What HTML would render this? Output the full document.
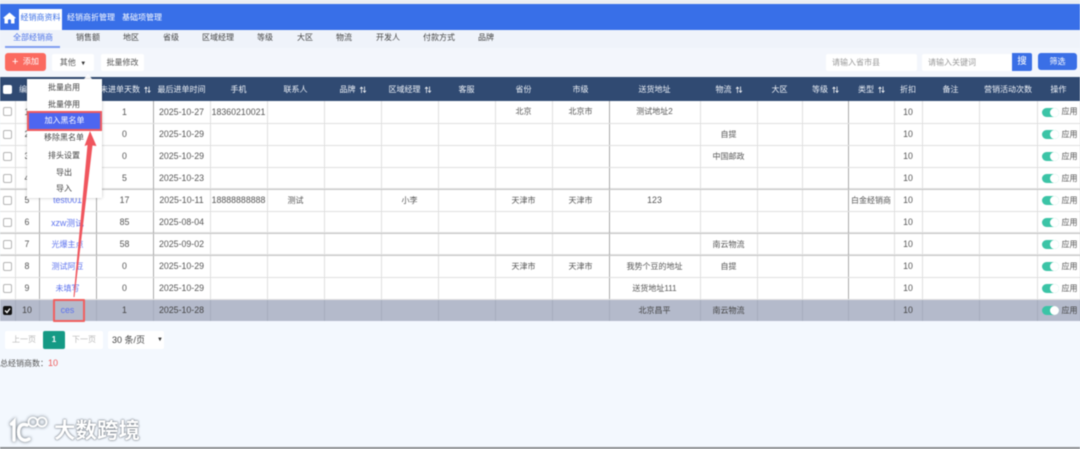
<!DOCTYPE html>
<html lang="zh-CN">
<head>
<meta charset="utf-8">
<title>经销商资料</title>
<style>
*{box-sizing:border-box;margin:0;padding:0}
html,body{width:1080px;height:449px;overflow:hidden;background:#f3f8fe}
body{font-family:"Liberation Sans","Noto Sans CJK SC",sans-serif;font-size:8px;color:#444;position:relative}
#wrap{position:absolute;left:0;top:0;width:1080px;height:449px;filter:blur(.5px)}
.abs{position:absolute;white-space:nowrap}
#top{position:absolute;left:0;top:0;width:1080px;height:4px;background:#eceef2}
#nav{position:absolute;left:0;top:4px;width:1080px;height:26px;background:#386fe8}
#tabs{position:absolute;left:0;top:30px;width:1080px;height:18px;background:#eff3fa}
#bar{position:absolute;left:0;top:48px;width:1080px;height:29px;background:#f3f6fc}
.tab{position:absolute;top:32px;font-size:8px;line-height:12px;color:#444;white-space:nowrap}
.btn{position:absolute;background:#fff;border-radius:2px;text-align:center;color:#555;white-space:nowrap}
table{position:absolute;left:0;top:77px;width:1080px;border-collapse:collapse;table-layout:fixed;background:#fff}
th{height:24px;background:#304a72;color:#eef2f8;font-weight:normal;font-size:8px;text-align:center;white-space:nowrap;overflow:hidden;padding:0}
td{height:22px;border-bottom:1px solid #e0e0e0;border-right:1px solid #e0e0e0;text-align:center;white-space:nowrap;overflow:hidden;padding:0;color:#555;font-size:8px}
td.d{border-right-color:#aaa}
td.n{font-size:8.8px}
tr.thick td{border-bottom-color:#c8c8c8;box-shadow:inset 0 -1px 0 #e2e2e2}
tr.sel td{background:#b4bacb;border-right-color:#a6acbe;border-bottom:none;color:#444}
td a{color:#5d73ee;text-decoration:none}
.s{font-size:7px;letter-spacing:-1px;margin-left:4px;color:#fff;font-weight:bold}
.cb{display:inline-block;width:9px;height:9px;border:1px solid #b5b5b5;border-radius:2px;background:#fff;vertical-align:middle}
.sw{display:inline-block;width:17px;height:9px;border-radius:5px;background:#3bc4a6;position:relative;vertical-align:middle;margin-right:3px}
.sw:after{content:"";position:absolute;right:0;top:0;width:9px;height:9px;border-radius:50%;background:#fff}
td.o{text-align:left;padding-left:4px}
.m{position:absolute;left:27px;width:74px;text-align:center;color:#444;line-height:12px;font-size:8px}
</style>
</head>
<body>
<div id="wrap">
<div id="top"></div>
<div id="nav"></div>
<div id="tabs"></div>
<div id="bar"></div>

<svg class="abs" style="left:3px;top:12px" width="13" height="12" viewBox="0 0 13 12"><path d="M6.5 .5 L13 6 L11.5 6.5 V11.5 H8 V8 Q6.5 6.5 5 8 V11.5 H1.5 V6.5 L0 6 Z" fill="#fff"/></svg>
<div class="abs" style="left:19px;top:9px;width:43px;height:21px;background:#fff;color:#3a6fe6;text-align:center;line-height:18px;font-size:8px">经销商资料</div>
<div class="abs" style="left:67px;top:12px;color:#fff;line-height:12px">经销商折管理</div>
<div class="abs" style="left:122px;top:12px;color:#fff;line-height:12px">基础项管理</div>

<div class="tab" style="left:13px;color:#4a72e8">全部经销商</div>
<div class="abs" style="left:5px;top:46px;width:55px;height:1.5px;background:#7f9df0"></div>
<div class="tab" style="left:76px">销售额</div>
<div class="tab" style="left:123px">地区</div>
<div class="tab" style="left:163px">省级</div>
<div class="tab" style="left:202px">区域经理</div>
<div class="tab" style="left:257px">等级</div>
<div class="tab" style="left:297px">大区</div>
<div class="tab" style="left:336px">物流</div>
<div class="tab" style="left:376px">开发人</div>
<div class="tab" style="left:423px">付款方式</div>
<div class="tab" style="left:478px">品牌</div>

<div class="btn" style="left:5px;top:53px;width:41px;height:18px;background:#fb6a60;color:#fff;line-height:18px;border-radius:3px"><span style="font-size:11px;vertical-align:-1px">+</span> &nbsp;添加</div>
<div class="btn" style="left:52px;top:54px;width:42px;height:17px;line-height:17px">其他 &nbsp;<span style="font-size:6px;color:#333">▼</span></div>
<div class="btn" style="left:101px;top:54px;width:43px;height:17px;line-height:17px">批量修改</div>

<div class="btn" style="left:826px;top:54px;width:91px;height:17px;line-height:17px;text-align:left;padding-left:6px;color:#999">请输入省市县</div>
<div class="btn" style="left:922px;top:54px;width:90px;height:17px;line-height:17px;text-align:left;padding-left:6px;color:#999;border-radius:2px 0 0 2px">请输入关键词</div>
<div class="btn" style="left:1012px;top:53px;width:20px;height:18px;line-height:18px;background:#3a6fe6;color:#fff;border-radius:0 2px 2px 0;font-size:9.5px">搜</div>
<div class="btn" style="left:1038px;top:53px;width:39px;height:17px;line-height:17px;background:#3a6fe6;color:#fff;border-radius:3px">筛选</div>

<table>
<colgroup>
<col style="width:15px"><col style="width:24px"><col style="width:57px"><col style="width:57px"><col style="width:57px"><col style="width:57px"><col style="width:57px"><col style="width:57px"><col style="width:57px"><col style="width:57px"><col style="width:57px"><col style="width:57px"><col style="width:91px"><col style="width:57px"><col style="width:45px"><col style="width:46px"><col style="width:46px"><col style="width:28px"><col style="width:57px"><col style="width:58px"><col style="width:43px">
</colgroup>
<tr><th><span class="cb" style="border:none"></span></th><th>编号</th><th>经销商</th><th style="text-align:left;padding-left:4px">未进单天数<span class="s">⇅</span></th><th>最后进单时间</th><th>手机</th><th>联系人</th><th>品牌<span class="s">⇅</span></th><th>区域经理<span class="s">⇅</span></th><th>客服</th><th>省份</th><th>市级</th><th>送货地址</th><th>物流<span class="s">⇅</span></th><th>大区</th><th>等级<span class="s">⇅</span></th><th>类型<span class="s">⇅</span></th><th>折扣</th><th>备注</th><th>营销活动次数</th><th>操作</th></tr>
<tr><td><span class="cb"></span></td><td class="d n">1</td><td class="d"><a>test</a></td><td class="d n">1</td><td class="n">2025-10-27</td><td class="n">18360210021</td><td></td><td></td><td></td><td></td><td>北京</td><td class="d">北京市</td><td>测试地址2</td><td></td><td></td><td class="d"></td><td></td><td class="n">10</td><td></td><td></td><td class="o"><span class="sw"></span>应用</td></tr>
<tr><td><span class="cb"></span></td><td class="d n">2</td><td class="d"></td><td class="d n">0</td><td class="n">2025-10-29</td><td></td><td></td><td></td><td></td><td></td><td></td><td class="d"></td><td></td><td>自提</td><td></td><td class="d"></td><td></td><td class="n">10</td><td></td><td></td><td class="o"><span class="sw"></span>应用</td></tr>
<tr><td><span class="cb"></span></td><td class="d n">3</td><td class="d"></td><td class="d n">0</td><td class="n">2025-10-29</td><td></td><td></td><td></td><td></td><td></td><td></td><td class="d"></td><td></td><td>中国邮政</td><td></td><td class="d"></td><td></td><td class="n">10</td><td></td><td></td><td class="o"><span class="sw"></span>应用</td></tr>
<tr class="thick"><td><span class="cb"></span></td><td class="d n">4</td><td class="d"></td><td class="d n">5</td><td class="n">2025-10-23</td><td></td><td></td><td></td><td></td><td></td><td></td><td class="d"></td><td></td><td></td><td></td><td class="d"></td><td></td><td class="n">10</td><td></td><td></td><td class="o"><span class="sw"></span>应用</td></tr>
<tr><td><span class="cb"></span></td><td class="d n">5</td><td class="d n"><a>test001</a></td><td class="d n">17</td><td class="n">2025-10-11</td><td class="n">18888888888</td><td>测试</td><td></td><td>小李</td><td></td><td>天津市</td><td class="d">天津市</td><td class="n">123</td><td></td><td></td><td class="d"></td><td>白金经销商</td><td class="n">10</td><td></td><td></td><td class="o"><span class="sw"></span>应用</td></tr>
<tr class="thick"><td><span class="cb"></span></td><td class="d n">6</td><td class="d n"><a>xzw测试</a></td><td class="d n">85</td><td class="n">2025-08-04</td><td></td><td></td><td></td><td></td><td></td><td></td><td class="d"></td><td></td><td></td><td></td><td class="d"></td><td></td><td class="n">10</td><td></td><td></td><td class="o"><span class="sw"></span>应用</td></tr>
<tr class="thick"><td><span class="cb"></span></td><td class="d n">7</td><td class="d"><a>光爆主点</a></td><td class="d n">58</td><td class="n">2025-09-02</td><td></td><td></td><td></td><td></td><td></td><td></td><td class="d"></td><td></td><td>南云物流</td><td></td><td class="d"></td><td></td><td class="n">10</td><td></td><td></td><td class="o"><span class="sw"></span>应用</td></tr>
<tr><td><span class="cb"></span></td><td class="d n">8</td><td class="d"><a>测试阿豆</a></td><td class="d n">0</td><td class="n">2025-10-29</td><td></td><td></td><td></td><td></td><td></td><td>天津市</td><td class="d">天津市</td><td>我势个豆的地址</td><td>自提</td><td></td><td class="d"></td><td></td><td class="n">10</td><td></td><td></td><td class="o"><span class="sw"></span>应用</td></tr>
<tr><td><span class="cb"></span></td><td class="d n">9</td><td class="d"><a>未填写</a></td><td class="d n">0</td><td class="n">2025-10-29</td><td></td><td></td><td></td><td></td><td></td><td></td><td class="d"></td><td>送货地址111</td><td></td><td></td><td class="d"></td><td></td><td class="n">10</td><td></td><td></td><td class="o"><span class="sw"></span>应用</td></tr>
<tr class="sel"><td><span class="cb" style="background:#111;border-color:#111;position:relative"><svg style="position:absolute;left:0;top:0" width="7" height="7" viewBox="0 0 7 7"><path d="M1 3.5 L3 5.5 L6 1.5" stroke="#fff" stroke-width="1.3" fill="none"/></svg></span></td><td class="n">10</td><td class="n"><a>ces</a></td><td class="n">1</td><td class="n">2025-10-28</td><td></td><td></td><td></td><td></td><td></td><td></td><td></td><td>北京昌平</td><td>南云物流</td><td></td><td></td><td></td><td class="n">10</td><td></td><td></td><td class="o"><span class="sw"></span>应用</td></tr>
</table>

<div class="btn" style="left:5px;top:331px;width:38px;height:18px;line-height:18px;color:#bbb">上一页</div>
<div class="btn" style="left:43px;top:331px;width:22px;height:18px;line-height:18px;background:#159a85;color:#fff;font-weight:bold">1</div>
<div class="btn" style="left:65px;top:331px;width:38px;height:18px;line-height:18px;color:#bbb">下一页</div>
<div class="btn" style="left:108px;top:331px;width:56px;height:18px;line-height:18px;text-align:left;padding-left:4px;color:#444;font-size:9px">30 条/页<span class="abs" style="left:49px;top:0;font-size:6px;color:#333">▼</span></div>
<div class="abs" style="left:0;top:357px;line-height:12px;color:#555">总经销商数：<span style="color:#ee5a5a;font-size:9px">10</span></div>

<!-- dropdown -->
<div class="abs" style="left:84px;top:74px;width:0;height:0;border-left:4px solid transparent;border-right:4px solid transparent;border-bottom:5px solid #fff"></div>
<div class="abs" style="left:27px;top:79px;width:75px;height:119px;background:#fff;box-shadow:0 0 3px rgba(0,0,0,.25)"></div>
<div class="m" style="top:82px">批量启用</div>
<div class="m" style="top:98.5px">批量停用</div>
<div class="abs" style="left:27px;top:111px;width:75px;height:20px;background:#4d66f0;border:2px solid #ef5a5f;color:#fff;text-align:center;line-height:16px">加入黑名单</div>
<div class="m" style="top:132px">移除黑名单</div>
<div class="m" style="top:150px">排头设置</div>
<div class="m" style="top:166.5px">导出</div>
<div class="m" style="top:183px">导入</div>

<!-- ces box -->
<div class="abs" style="left:53px;top:299px;width:32px;height:23px;border:2px solid #f0605f;border-radius:1px"></div>

<!-- arrow -->
<svg class="abs" style="left:0;top:0" width="1080" height="449" viewBox="0 0 1080 449"><path d="M90 131 L96.5 146 L92.5 145.5 L74.5 297 L73.5 297 L87.5 145 L84.5 146 Z" fill="#f0555d"/></svg>

<!-- watermark -->
<svg class="abs" style="left:6px;top:413px" width="48" height="34" viewBox="0 0 48 34" fill="none" stroke="#fff" stroke-linecap="round"><g style="filter:drop-shadow(0 0 1.5px rgba(70,80,90,.9))"><path d="M5.5 11 L8 8.5 V27" stroke-width="3.4"/><path d="M21 12 C15 10 12.5 14 12.5 19 C12.5 26 18 29 23 26" stroke-width="3.4"/><circle cx="27" cy="9" r="4.5" stroke-width="1.8"/><circle cx="36" cy="9" r="4.5" stroke-width="1.8"/></g></svg>
<div class="abs" style="left:54px;top:418px;font-size:21.5px;line-height:26px;color:#fff;font-weight:bold;text-shadow:0 0 2px #5f6771,0 0 1px #5f6771">大数跨境</div>
<div class="abs" style="left:0;top:447px;width:1080px;height:2px;background:#8d8f92"></div>
</div>
</body>
</html>
